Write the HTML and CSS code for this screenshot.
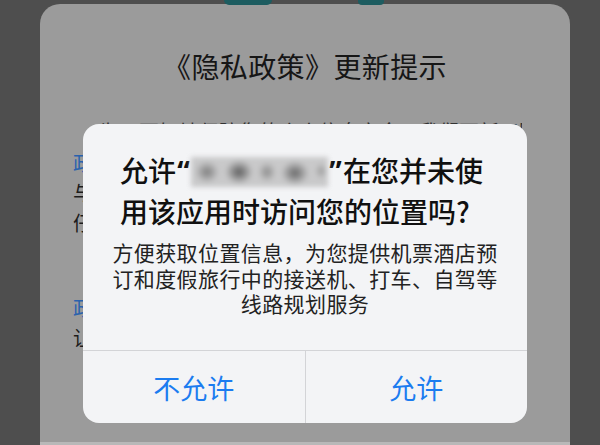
FILE: index.html
```html
<!DOCTYPE html>
<html lang="zh-CN">
<head>
<meta charset="utf-8">
<title>位置权限</title>
<link rel="stylesheet" href="styles.css">
</head>
<body>
<div class="screen">
  <div class="topstrip">
    <span class="tab tab-a"></span>
    <span class="tab tab-b"></span>
  </div>
  <div class="card">
    <h1 class="card-title">《隐私政策》更新提示</h1>
    <p class="para p1">为了更好地保障您的个人信息安全，我们更新了隐私政策条款内容。</p>
    <p class="para p2"><span class="link">政策更新要点</span>：关于个人信息的收集、使用、存储与共享规则，我们在条款中进行了详细说明，请您仔细阅读。</p>
    <p class="para p3"><span class="link">政策全文链接</span>：您可以在设置中随时查看</p>
    <p class="para p4">让我们一起守护您的隐私安全。</p>
  </div>

  <div class="alert">
    <div class="alert-body">
      <div class="alert-title">
        <div class="tline">允许<span class="q">“</span><span class="blur"></span><span class="q">”</span>在您并未使</div>
        <div class="tline">用该应用时访问您的位置吗?</div>
      </div>
      <div class="alert-msg">方便获取位置信息，为您提供机票酒店预订和度假旅行中的接送机、打车、自驾等线路规划服务</div>
    </div>
    <div class="alert-actions">
      <div class="btn">不允许</div>
      <div class="btn">允许</div>
    </div>
  </div>
</div>
</body>
</html>
```

FILE: styles.css
```css
* { box-sizing: border-box; }
html, body {
  margin: 0;
  padding: 0;
  background: #4e4e4e;
}
body {
  font-family: "Noto Sans CJK SC", "Noto Sans", sans-serif;
}
.screen {
  position: relative;
  width: 600px;
  height: 445px;
  overflow: hidden;
  padding: 0 30px 0 40px;
  display: flex;
  flex-direction: column;
}
.topstrip {
  height: 4px;
  display: flex;
  position: relative;
}
.tab {
  display: block;
  height: 5px;
  background: #1d5c60;
}
.tab-a {
  width: 48px;
  margin-left: 184px;
  border-radius: 0 0 22px 22px;
}
.tab-b {
  width: 26px;
  margin-left: 86px;
  border-radius: 0 0 4px 4px;
}
.card {
  flex: 1;
  background: #9b9b9b;
  border-radius: 20px 20px 0 0;
  padding: 44px 48px 0 33px;
  border-bottom: 3px solid #b8b8b8;
  overflow: hidden;
  color: #1c1c1c;
}
.card-title {
  margin: 0;
  font-size: 28px;
  font-weight: 400;
  line-height: 36px;
  text-align: center;
  letter-spacing: 0.4px;
  color: #161616;
  margin-right: -15px;
}
.para {
  margin: 0;
  font-size: 20px;
  line-height: 30px;
}
.p1 { margin-top: 33px; white-space: nowrap; overflow: hidden; padding-left: 26px; color: #333; }
.p2 { margin-top: 1px; }
.p3 { margin-top: 55px; white-space: nowrap; overflow: hidden; }
.p4 { white-space: nowrap; }
.link { color: #2a62ad; }

.alert {
  position: absolute;
  left: 83px;
  top: 124px;
  width: 444px;
  height: 299px;
  background: #f3f4f6;
  border-radius: 16px;
  display: flex;
  flex-direction: column;
  overflow: hidden;
}
.alert-body {
  height: 227px;
  padding: 26px 20px 0;
  text-align: center;
  border-bottom: 1px solid #d3d4d7;
}
.alert-title {
  font-size: 28px;
  font-weight: 500;
  line-height: 40px;
  color: #101010;
  text-align: left;
  padding-left: 17px;
}
.tline { white-space: nowrap; }
.q {
  font-family: "Noto Sans", sans-serif;
  font-weight: 700;
  display: inline-block;
  width: 15px;
  text-align: center;
}
.blur {
  display: inline-block;
  width: 137px;
  height: 30px;
  vertical-align: -5px;
  background:
    radial-gradient(ellipse 12px 11px at 16px 15px, #7c7c7c, transparent),
    radial-gradient(ellipse 14px 12px at 48px 15px, #5a5a5a, transparent),
    radial-gradient(ellipse 9px 10px at 76px 15px, #8a8a8a, transparent),
    radial-gradient(ellipse 14px 12px at 104px 16px, #666, transparent),
    radial-gradient(ellipse 6px 8px at 130px 14px, #9a9a9a, transparent),
    #c9c9ca;
  filter: blur(2.5px);
}
.alert-msg {
  margin-top: 9px;
  font-size: 21px;
  line-height: 25.5px;
  letter-spacing: 0.4px;
  color: #222;
  padding: 0 8px;
}
.alert-actions {
  flex: 1;
  display: flex;
}
.btn {
  flex: 1;
  display: flex;
  align-items: center;
  justify-content: center;
  font-size: 27px;
  color: #1b7cf0;
}
.btn + .btn {
  border-left: 1px solid #d3d4d7;
}
```
